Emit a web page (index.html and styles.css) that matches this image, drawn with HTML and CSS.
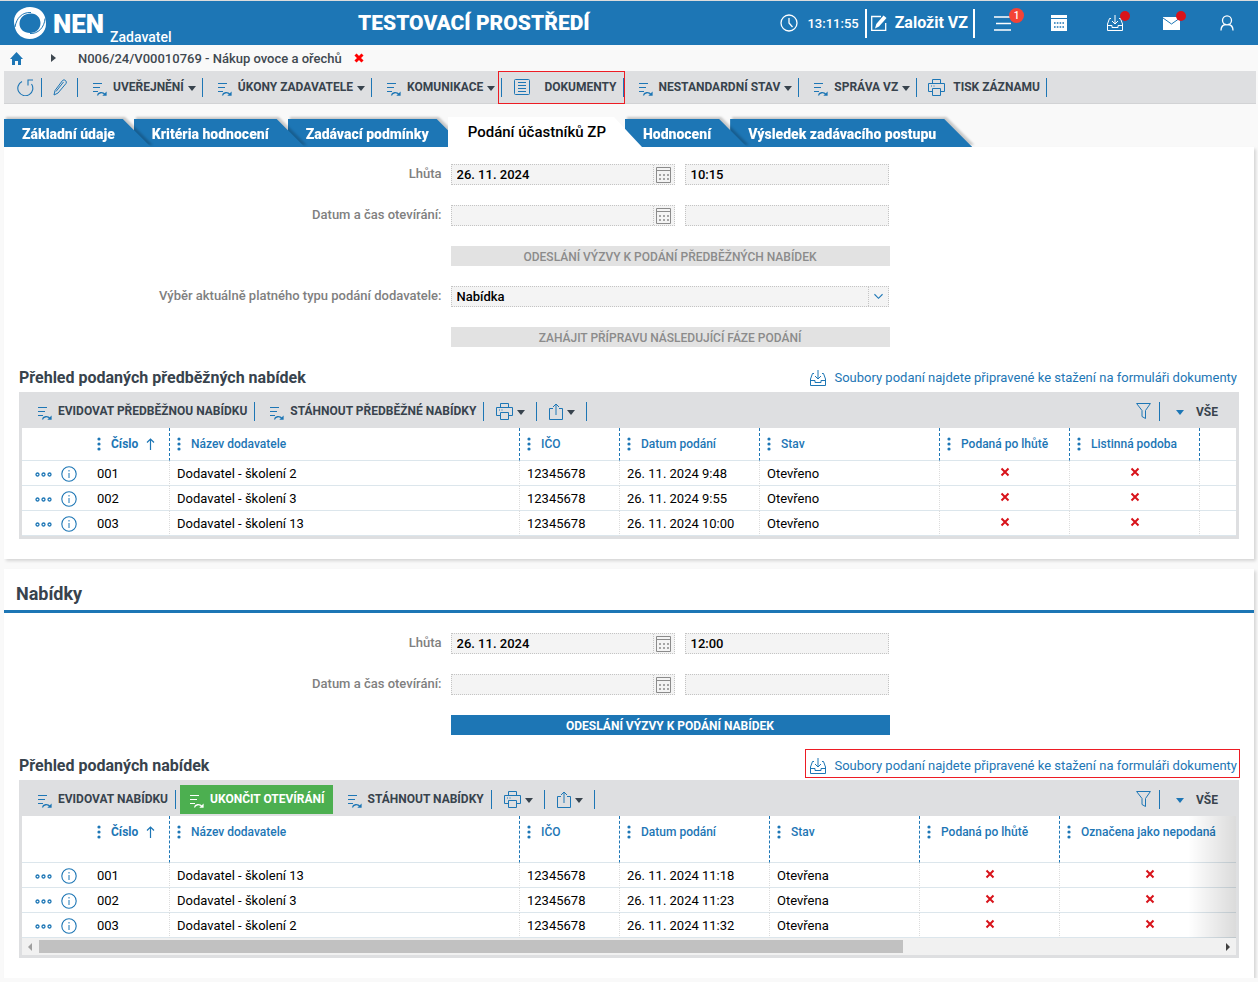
FILE: index.html
```html
<!DOCTYPE html>
<html lang="cs">
<head>
<meta charset="utf-8">
<title>NEN – Podání účastníků ZP</title>
<link rel="stylesheet" href="styles.css">
</head>
<body>
<svg class="sprite" aria-hidden="true">
  <symbol id="i-action" viewBox="0 0 14 14"><path d="M0 1.500h9M0 5.500h7M0 9.500h5" fill="none" stroke="currentColor"/><path d="M4.500 13.500c.5-3 5-4 7.500-1" fill="none" stroke="currentColor" stroke-width="1.300"/><path d="M13.600 9.500v4.200H9.300z" fill="currentColor"/></symbol>
  <symbol id="i-printer" viewBox="0 0 17 17"><path d="M4.500 4.500v-4h8v4M4.500 12.500h-4v-8h16v8h-4M4.500 9.500v7h8v-7zM3 7h1M5.500 7h1" fill="none" stroke="currentColor"/></symbol>
  <symbol id="i-share" viewBox="0 0 14 17"><path d="M4 5.500H.5v11h13v-11H10M7 12V1M4 4l3-3 3 3" fill="none" stroke="currentColor"/></symbol>
  <symbol id="i-filter" viewBox="0 0 15 16"><path d="M.6.500h13.800L9.500 7.500v8l-3.500-2v-6z" fill="none" stroke="currentColor"/></symbol>
  <symbol id="i-caret" viewBox="0 0 8 5"><path d="M0 0h8L4 5z" fill="currentColor"/></symbol>
  <symbol id="i-tray" viewBox="0 0 16 16"><path d="M4 3.500H2.500L.5 9v6.500h15V9l-2-5.500H12M.5 10.500h4.500v2h6v-2h4.500M8 0v9M5 6l3 3 3-3" fill="none" stroke="currentColor"/></symbol>
  <symbol id="i-cross" viewBox="0 0 10 10"><path d="M1.500 1.500l7 7M8.500 1.500l-7 7" fill="none" stroke="currentColor" stroke-width="2"/></symbol>
  <symbol id="i-dots" viewBox="0 0 4 14"><circle cx="2" cy="2" r="1.600" fill="currentColor"/><circle cx="2" cy="7" r="1.600" fill="currentColor"/><circle cx="2" cy="12" r="1.600" fill="currentColor"/></symbol>
  <symbol id="i-more" viewBox="0 0 17 5"><g fill="none" stroke="currentColor" stroke-width="1.300"><circle cx="2.500" cy="2.500" r="1.500"/><circle cx="8.500" cy="2.500" r="1.500"/><circle cx="14.500" cy="2.500" r="1.500"/></g></symbol>
  <symbol id="i-info" viewBox="0 0 16 16"><circle cx="8" cy="8" r="7.200" fill="none" stroke="currentColor" stroke-width="1.100"/><path d="M8 7v5M8 4v1.500" stroke="currentColor" fill="none"/></symbol>
  <symbol id="i-cal" viewBox="0 0 15 16"><path d="M.5.500h14v15H.5zM0 3.500h15" fill="none" stroke="currentColor"/><path d="M3 8h2M7 8h2M11 8h2M3 12h2M7 12h2M11 12h2" stroke="currentColor" stroke-width="1.500"/></symbol>
  <symbol id="i-up" viewBox="0 0 9 12"><path d="M4.500 12V1M1 4.500L4.500 1 8 4.500" fill="none" stroke="currentColor" stroke-width="1.200"/></symbol>
</svg>

<header class="top">
  <a class="brand" href="#">
    <svg class="logo" viewBox="0 0 32 32"><path fill-rule="evenodd" fill="#fff" d="M16 0C7 0 0 6.500 0 14c0 2 .3 3.500.6 4.500L1 21c2 7 8 11 14.500 11C25 32 32 25 32 17c0-2-.2-3.500-.6-5l-.4-2C29 3.500 23 0 16 0zM17 6.500c6 0 9.500 4.500 9.500 9.500 0 6-4.500 10-10.500 10S5.500 22 5.500 17C5.500 10.500 10.500 6.500 17 6.500z"/><path fill="none" stroke="#1d76b5" stroke-width="1" d="M1 20C2.500 11 8 5 17 5.500M31 11.500c-.5 9-7 15.500-15 15"/></svg>
    <span class="brand-name">NEN</span><span class="brand-role">Zadavatel</span>
  </a>
  <div class="env">TESTOVACÍ PROSTŘEDÍ</div>
  <div class="top-right">
    <svg class="clock" viewBox="0 0 18 18"><circle cx="9" cy="9" r="8" fill="none" stroke="#fff" stroke-width="1.300"/><path d="M9 4v5l3.500 4" fill="none" stroke="#fff" stroke-width="1.300"/></svg>
    <time class="time">13:11:55</time>
    <button class="create" type="button">
      <svg class="edit" viewBox="0 0 16 16"><path d="M10 1.500H.7v13.800h14V8" fill="none" stroke="#fff" stroke-width="1.300"/><path fill="#fff" d="M12.500.5l3 2.500-7.500 8.500-4 2 1.300-4.500z"/></svg>
      Založit VZ
    </button>
    <nav class="top-icons">
      <button class="ti" type="button" aria-label="Menu"><svg class="ico-menu" viewBox="0 0 18 15"><path d="M0 1h17M2 7.500h15M0 14h17" stroke="#fff" stroke-width="1.500"/></svg><span class="count">1</span></button>
      <button class="ti" type="button" aria-label="Kalendář"><svg class="ico16" viewBox="0 0 16 16"><path fill="#fff" d="M0 0h16v3H0zM0 4h16v12H0z"/><path d="M3 8h10M3 12h10" stroke="#1d76b5" stroke-width="1.600" stroke-dasharray="1.600 1.200"/></svg></button>
      <button class="ti" type="button" aria-label="Přijaté soubory"><svg class="ico16"><use href="#i-tray"/></svg><span class="dot"></span></button>
      <button class="ti" type="button" aria-label="Zprávy"><svg class="ico-mail" viewBox="0 0 17 13"><path fill="#fff" d="M0 0h17v13H0z"/><path d="M0 1l8.500 6L17 1" fill="none" stroke="#1d76b5"/></svg><span class="dot"></span></button>
      <button class="ti" type="button" aria-label="Uživatel"><svg class="ico16" viewBox="0 0 16 16"><circle cx="8" cy="5.300" r="4.500" fill="none" stroke="#fff" stroke-width="1.300"/><path d="M6.500 9.500C3.500 10 2 12.500 2 15.500M9.500 9.500c3 .5 4.500 3 4.500 6" fill="none" stroke="#fff" stroke-width="1.300"/></svg></button>
    </nav>
  </div>
</header>

<nav class="crumbs">
  <a class="home" href="#" aria-label="Domů"><svg class="ico-home" viewBox="0 0 13 13"><path fill="currentColor" d="M6.500 0L13 7h-2v6H8V9H5v4H2V7H0z"/></svg></a>
  <svg class="crumb-caret" viewBox="0 0 5 8"><path d="M0 0v8l5-4z" fill="currentColor"/></svg>
  <span class="crumb">N006/24/V00010769 - Nákup ovoce a ořechů</span>
  <button class="close" type="button" aria-label="Zavřít"><svg class="ico10" viewBox="0 0 10 10"><path d="M1.500 1.500l7 7M8.500 1.500l-7 7" stroke="currentColor" stroke-width="3"/></svg></button>
</nav>

<div class="toolbar main-bar">
  <button class="tool icon-only" type="button" aria-label="Obnovit"><svg class="ico17" viewBox="0 0 17 17"><path d="M5 2.500A7.500 7.500 0 1 0 14.500 5M11 6.500V1h5" fill="none" stroke="currentColor" stroke-width="1.100"/></svg></button>
  <button class="tool icon-only" type="button" aria-label="Upravit"><svg class="ico17" viewBox="0 0 17 17"><path d="M3 16l1-4.500L11.500 1.500q1.500-1.500 3 0t.5 3L7 14zM5 12.500L12.500 3" fill="none" stroke="currentColor"/></svg></button>
  <button class="tool" type="button"><svg class="act"><use href="#i-action"/></svg><span>UVEŘEJNĚNÍ</span><svg class="caret"><use href="#i-caret"/></svg></button>
  <button class="tool" type="button"><svg class="act"><use href="#i-action"/></svg><span>ÚKONY ZADAVATELE</span><svg class="caret"><use href="#i-caret"/></svg></button>
  <button class="tool" type="button"><svg class="act"><use href="#i-action"/></svg><span>KOMUNIKACE</span><svg class="caret"><use href="#i-caret"/></svg></button>
  <button class="tool docs" type="button"><svg class="ico16" viewBox="0 0 16 16"><rect x=".5" y=".5" width="15" height="15" rx="1" fill="none" stroke="currentColor"/><path d="M4 3.500h8M4 6.500h8M4 9.500h8M4 12.500h8" stroke="currentColor"/></svg><span>DOKUMENTY</span></button>
  <button class="tool" type="button"><svg class="act"><use href="#i-action"/></svg><span>NESTANDARDNÍ STAV</span><svg class="caret"><use href="#i-caret"/></svg></button>
  <button class="tool" type="button"><svg class="act"><use href="#i-action"/></svg><span>SPRÁVA VZ</span><svg class="caret"><use href="#i-caret"/></svg></button>
  <button class="tool print" type="button"><svg class="ico17"><use href="#i-printer"/></svg><span>TISK ZÁZNAMU</span></button>
</div>

<nav class="tabs">
  <a class="tab t1" href="#"><span class="tab-in">Základní údaje</span></a>
  <a class="tab t2" href="#"><span class="tab-in">Kritéria hodnocení</span></a>
  <a class="tab t3" href="#"><span class="tab-in">Zadávací podmínky</span></a>
  <a class="tab active" href="#" aria-current="page"><span class="tab-in">Podání účastníků ZP</span></a>
  <a class="tab t2" href="#"><span class="tab-in">Hodnocení</span></a>
  <a class="tab t3" href="#"><span class="tab-in">Výsledek zadávacího postupu</span></a>
</nav>

<main>
<section class="panel">
  <div class="form">
    <label for="d1">Lhůta</label>
    <div class="pair"><span class="date"><input id="d1" value="26. 11. 2024" readonly><button type="button" aria-label="Kalendář"><svg class="cal"><use href="#i-cal"/></svg></button></span><input class="field" aria-label="Lhůta – čas" value="10:15" readonly></div>
    <label for="d2">Datum a čas otevírání:</label>
    <div class="pair"><span class="date"><input id="d2" readonly><button type="button" aria-label="Kalendář"><svg class="cal"><use href="#i-cal"/></svg></button></span><input class="field" aria-label="Čas otevírání" readonly></div>
    <button class="wide" type="button" disabled>ODESLÁNÍ VÝZVY K PODÁNÍ PŘEDBĚŽNÝCH NABÍDEK</button>
    <label for="typ">Výběr aktuálně platného typu podání dodavatele:</label>
    <div class="select"><select id="typ"><option>Nabídka</option></select><svg class="chev" viewBox="0 0 10 6"><path d="M.5.500L5 5 9.500.500" fill="none" stroke="currentColor" stroke-width="1.200"/></svg></div>
    <button class="wide" type="button" disabled>ZAHÁJIT PŘÍPRAVU NÁSLEDUJÍCÍ FÁZE PODÁNÍ</button>
  </div>

  <div class="grid-head">
    <h3>Přehled podaných předběžných nabídek</h3>
    <a class="files" href="#"><svg class="ico16"><use href="#i-tray"/></svg>Soubory podaní najdete připravené ke stažení na formuláři dokumenty</a>
  </div>
  <div class="grid">
    <div class="toolbar">
      <button class="tool" type="button"><svg class="act"><use href="#i-action"/></svg><span>EVIDOVAT PŘEDBĚŽNOU NABÍDKU</span></button>
      <button class="tool" type="button"><svg class="act"><use href="#i-action"/></svg><span>STÁHNOUT PŘEDBĚŽNÉ NABÍDKY</span></button>
      <button class="tool mini" type="button" aria-label="Tisk"><svg class="ico17"><use href="#i-printer"/></svg><svg class="caret"><use href="#i-caret"/></svg></button>
      <button class="tool mini" type="button" aria-label="Export"><svg class="share"><use href="#i-share"/></svg><svg class="caret"><use href="#i-caret"/></svg></button>
      <div class="bar-right">
        <button class="tool filter" type="button" aria-label="Filtr"><svg class="ico-filter"><use href="#i-filter"/></svg></button>
        <button class="all" type="button"><svg class="caret blue"><use href="#i-caret"/></svg>VŠE</button>
      </div>
    </div>
    <table>
      <colgroup><col class="w68"><col class="w80"><col class="w350"><col class="w100"><col class="w140"><col class="w180"><col class="w130"><col class="w130"><col></colgroup>
      <thead><tr><th></th>
        <th><span class="th"><svg class="dots"><use href="#i-dots"/></svg><b>Číslo</b><svg class="up"><use href="#i-up"/></svg></span></th>
        <th><span class="th"><svg class="dots"><use href="#i-dots"/></svg>Název dodavatele</span></th>
        <th><span class="th"><svg class="dots"><use href="#i-dots"/></svg>IČO</span></th>
        <th><span class="th"><svg class="dots"><use href="#i-dots"/></svg>Datum podání</span></th>
        <th><span class="th"><svg class="dots"><use href="#i-dots"/></svg>Stav</span></th>
        <th><span class="th"><svg class="dots"><use href="#i-dots"/></svg>Podaná po lhůtě</span></th>
        <th><span class="th"><svg class="dots"><use href="#i-dots"/></svg>Listinná podoba</span></th>
        <th></th></tr></thead>
      <tbody>
        <tr><td class="acts"><svg class="more"><use href="#i-more"/></svg><svg class="ico16"><use href="#i-info"/></svg></td><td>001</td><td>Dodavatel - školení 2</td><td>12345678</td><td>26. 11. 2024 9:48</td><td>Otevřeno</td><td class="no"><svg class="ico10"><use href="#i-cross"/></svg></td><td class="no"><svg class="ico10"><use href="#i-cross"/></svg></td><td></td></tr>
        <tr><td class="acts"><svg class="more"><use href="#i-more"/></svg><svg class="ico16"><use href="#i-info"/></svg></td><td>002</td><td>Dodavatel - školení 3</td><td>12345678</td><td>26. 11. 2024 9:55</td><td>Otevřeno</td><td class="no"><svg class="ico10"><use href="#i-cross"/></svg></td><td class="no"><svg class="ico10"><use href="#i-cross"/></svg></td><td></td></tr>
        <tr><td class="acts"><svg class="more"><use href="#i-more"/></svg><svg class="ico16"><use href="#i-info"/></svg></td><td>003</td><td>Dodavatel - školení 13</td><td>12345678</td><td>26. 11. 2024 10:00</td><td>Otevřeno</td><td class="no"><svg class="ico10"><use href="#i-cross"/></svg></td><td class="no"><svg class="ico10"><use href="#i-cross"/></svg></td><td></td></tr>
      </tbody>
    </table>
  </div>
</section>

<section class="panel second">
  <h2>Nabídky</h2>
  <div class="form">
    <label for="d3">Lhůta</label>
    <div class="pair"><span class="date"><input id="d3" value="26. 11. 2024" readonly><button type="button" aria-label="Kalendář"><svg class="cal"><use href="#i-cal"/></svg></button></span><input class="field" aria-label="Lhůta – čas" value="12:00" readonly></div>
    <label for="d4">Datum a čas otevírání:</label>
    <div class="pair"><span class="date"><input id="d4" readonly><button type="button" aria-label="Kalendář"><svg class="cal"><use href="#i-cal"/></svg></button></span><input class="field" aria-label="Čas otevírání" readonly></div>
    <button class="wide primary" type="button">ODESLÁNÍ VÝZVY K PODÁNÍ NABÍDEK</button>
  </div>

  <div class="grid-head">
    <h3>Přehled podaných nabídek</h3>
    <a class="files marked" href="#"><svg class="ico16"><use href="#i-tray"/></svg>Soubory podaní najdete připravené ke stažení na formuláři dokumenty</a>
  </div>
  <div class="grid">
    <div class="toolbar">
      <button class="tool" type="button"><svg class="act"><use href="#i-action"/></svg><span>EVIDOVAT NABÍDKU</span></button>
      <button class="finish" type="button"><svg class="act"><use href="#i-action"/></svg><span>UKONČIT OTEVÍRÁNÍ</span></button>
      <button class="tool" type="button"><svg class="act"><use href="#i-action"/></svg><span>STÁHNOUT NABÍDKY</span></button>
      <button class="tool mini" type="button" aria-label="Tisk"><svg class="ico17"><use href="#i-printer"/></svg><svg class="caret"><use href="#i-caret"/></svg></button>
      <button class="tool mini" type="button" aria-label="Export"><svg class="share"><use href="#i-share"/></svg><svg class="caret"><use href="#i-caret"/></svg></button>
      <div class="bar-right">
        <button class="tool filter" type="button" aria-label="Filtr"><svg class="ico-filter"><use href="#i-filter"/></svg></button>
        <button class="all" type="button"><svg class="caret blue"><use href="#i-caret"/></svg>VŠE</button>
      </div>
    </div>
    <div class="clip">
    <table class="tall">
      <colgroup><col class="w68"><col class="w80"><col class="w350"><col class="w100"><col class="w150"><col class="w150"><col class="w140"><col></colgroup>
      <thead><tr><th></th>
        <th><span class="th"><svg class="dots"><use href="#i-dots"/></svg><b>Číslo</b><svg class="up"><use href="#i-up"/></svg></span></th>
        <th><span class="th"><svg class="dots"><use href="#i-dots"/></svg>Název dodavatele</span></th>
        <th><span class="th"><svg class="dots"><use href="#i-dots"/></svg>IČO</span></th>
        <th><span class="th"><svg class="dots"><use href="#i-dots"/></svg>Datum podání</span></th>
        <th><span class="th"><svg class="dots"><use href="#i-dots"/></svg>Stav</span></th>
        <th><span class="th"><svg class="dots"><use href="#i-dots"/></svg>Podaná po lhůtě</span></th>
        <th><span class="th"><svg class="dots"><use href="#i-dots"/></svg>Označena jako nepodaná</span></th></tr></thead>
      <tbody>
        <tr><td class="acts"><svg class="more"><use href="#i-more"/></svg><svg class="ico16"><use href="#i-info"/></svg></td><td>001</td><td>Dodavatel - školení 13</td><td>12345678</td><td>26. 11. 2024 11:18</td><td>Otevřena</td><td class="no"><svg class="ico10"><use href="#i-cross"/></svg></td><td class="no"><svg class="ico10"><use href="#i-cross"/></svg></td></tr>
        <tr><td class="acts"><svg class="more"><use href="#i-more"/></svg><svg class="ico16"><use href="#i-info"/></svg></td><td>002</td><td>Dodavatel - školení 3</td><td>12345678</td><td>26. 11. 2024 11:23</td><td>Otevřena</td><td class="no"><svg class="ico10"><use href="#i-cross"/></svg></td><td class="no"><svg class="ico10"><use href="#i-cross"/></svg></td></tr>
        <tr><td class="acts"><svg class="more"><use href="#i-more"/></svg><svg class="ico16"><use href="#i-info"/></svg></td><td>003</td><td>Dodavatel - školení 2</td><td>12345678</td><td>26. 11. 2024 11:32</td><td>Otevřena</td><td class="no"><svg class="ico10"><use href="#i-cross"/></svg></td><td class="no"><svg class="ico10"><use href="#i-cross"/></svg></td></tr>
      </tbody>
    </table>
    </div>
    <div class="scroll">
      <svg class="arrow off" viewBox="0 0 4 8"><path d="M4 0v8L0 4z" fill="currentColor"/></svg>
      <div class="track"><div class="thumb"></div></div>
      <svg class="arrow" viewBox="0 0 4 8"><path d="M0 0v8l4-4z" fill="currentColor"/></svg>
    </div>
  </div>
</section>
</main>
</body>
</html>
```
FILE: styles.css
```css
* { box-sizing: border-box; }
body {
  margin: 0;
  background: #f9f9f9;
  color: #000;
  font-family: Roboto, "Liberation Sans", sans-serif;
  font-size: 13px;
  line-height: 16px;
}
button, input, select { font: inherit; color: inherit; margin: 0; padding: 0; border: 0; background: none; border-radius: 0; }
svg { display: block; flex: none; }
a { text-decoration: none; color: inherit; }
.sprite { position: absolute; width: 0; height: 0; }

.ico10 { width: 10px; height: 10px; }
.ico16 { width: 16px; height: 16px; }
.ico17 { width: 17px; height: 17px; }

/* header */
.top {
  display: grid;
  grid-template-columns: 358px auto 1fr;
  height: 45px;
  background: #1d76b5;
  border-top: 1px solid #dcdcdc;
  color: #fff;
}
.brand { display: flex; align-items: center; padding-left: 14px; }
.logo { width: 32px; height: 32px; margin-right: 7px; }
.brand-name { font-size: 26px; font-weight: 900; margin-right: 6px; padding-top: 2px; }
.brand-role { align-self: flex-end; font-size: 14px; font-weight: 500; }
.env { font-size: 21px; font-weight: 900; line-height: 44px; }
.top-right { display: flex; align-items: center; justify-content: flex-end; padding-right: 3px; }
.clock { width: 18px; height: 18px; margin-right: 9px; }
.time { font-weight: 500; padding-top: 2px; }
.create {
  display: flex; align-items: center; gap: 8px;
  height: 29px; margin-left: 6px; padding: 0 5px 0 4px;
  border-left: 2px solid #fff; border-right: 2px solid #fff;
  font-size: 16px; font-weight: 700;
}
.edit { width: 16px; height: 16px; }
.top-icons { display: flex; }
.ti { position: relative; width: 56px; height: 44px; display: flex; align-items: center; justify-content: center; }
.ico-menu { width: 18px; height: 15px; }
.ico-mail { width: 17px; height: 13px; }
.count, .dot { position: absolute; border-radius: 50%; }
.count { top: 7px; left: 34px; width: 15px; height: 15px; line-height: 15px; font-size: 10px; font-weight: 500; background: #f44336; }
.dot { top: 10px; left: 33px; width: 10px; height: 10px; background: #d8131a; }

/* breadcrumb */
.crumbs { display: flex; align-items: center; height: 26px; padding-left: 10px; font-weight: 500; color: #3f4850; }
.crumb { padding-top: 2px; }
.home { color: #1d76b5; }
.ico-home { width: 13px; height: 13px; }
.crumb-caret { width: 5px; height: 8px; margin: 0 22px 0 28px; }
.close { color: #f00; margin-left: 12px; }

/* toolbars */
.toolbar { display: flex; align-items: center; background: #dedfe1; color: #38434d; font-size: 12px; font-weight: 700; }
.main-bar { height: 33px; margin: 0 2px 0 4px; border-bottom: 1px solid #d2d3d5; }
.tool { position: relative; display: flex; align-items: center; height: 19px; padding: 0 7px 0 15px; border-right: 1px solid #1d76b5; white-space: nowrap; }
.main-bar .tool { padding-right: 6px; }
.tool svg, .all .blue { color: #1d76b5; }
.act { width: 14px; height: 14px; margin: 4px 6px 0 0; }
.caret { width: 8px; height: 5px; margin-left: 4px; }
.tool .caret { color: #38434d; margin-top: 2px; }
.main-bar .icon-only { width: 36px; padding: 0; justify-content: center; }
.main-bar .icon-only:first-child { width: 38px; padding-left: 5px; }
.main-bar .docs { padding-left: 12px; }
.docs span { margin-left: 14px; }
.docs::after { content: ""; position: absolute; inset: -7px -2px -7px -4px; border: 1px solid #ed1c24; }
.main-bar .print { padding-left: 11px; }
.print span { margin-left: 8px; }
.tool.mini { padding: 0 11px 0 12px; }
.share { width: 14px; height: 17px; }
.bar-right { display: flex; align-items: center; margin-left: auto; }
.tool.filter { padding-right: 8px; }
.ico-filter { width: 15px; height: 16px; }
.all { display: flex; align-items: center; gap: 12px; padding: 2px 18px 0 12px; }
.finish { display: flex; align-items: center; height: 29px; margin-left: 4px; padding: 0 8px 0 10px; background: #4caf50; color: #fff; }

/* tabs */
.tabs { display: flex; align-items: flex-end; padding: 13px 4px 0; color: #fff; }
.tab { position: relative; margin-right: -17px; filter: drop-shadow(2px -2px 1px rgba(0, 0, 0, .2)); }
.tab-in {
  display: block; height: 28px; padding: 0 36px 0 18px; line-height: 30px;
  font-size: 14px; font-weight: 900; white-space: nowrap; background: #1d76b5;
  clip-path: polygon(0 0, calc(100% - 28px) 0, 100% 100%, 0 100%);
}
.t1 { z-index: 3; }
.t2 { z-index: 2; }
.t3 { z-index: 1; }
.active { z-index: 4; color: #000; filter: none; }
.active .tab-in { height: 30px; padding-left: 20px; font-size: 15px; font-weight: 500; background: #fff; }

/* panels */
.panel { margin: 0 4px 10px; padding: 17px 15px 20px 15px; background: #fff; box-shadow: 2px 2px 3px rgba(0, 0, 0, .14); }
.panel.second { padding-top: 0; margin-bottom: 0; }
h2 { margin: 0 -15px 20px; padding: 13px 12px 4px; font-size: 18px; line-height: 24px; font-weight: 700; color: #38434d; border-bottom: 3px solid #1d76b5; }

.form { display: grid; grid-template-columns: 35% 36%; gap: 20px 9px; margin: 0 -15px; }
.form label { padding-top: 2px; text-align: right; font-weight: 500; color: #808080; }
.pair { display: grid; grid-template-columns: 224fr 204fr; gap: 10px; padding-right: 12px; }
.date, .field, .select { height: 21px; background: #f4f4f4; border: 1px dotted #c4c4c4; font-weight: 500; }
.date { display: flex; }
.date input { flex: 1; min-width: 0; padding-left: 5px; }
.date button { width: 21px; display: flex; align-items: center; justify-content: center; border-left: 1px dotted #c4c4c4; color: #8b8b8b; }
.cal { width: 15px; height: 16px; }
.field { width: 100%; padding-left: 5px; }
.select { position: relative; margin-right: 12px; }
.select select { width: 100%; height: 100%; padding-left: 5px; appearance: none; }
.chev { position: absolute; top: 0; right: 0; width: 20px; height: 19px; padding: 6px 5px; border-left: 1px dotted #c4c4c4; color: #1d76b5; pointer-events: none; }
.wide { grid-column: 2; height: 20px; margin-right: 11px; padding-top: 2px; background: #e2e2e2; color: #8b8b8b; font-size: 12px; font-weight: 500; }
.wide.primary { background: #1d76b5; color: #fff; font-weight: 700; }

/* grids */
.grid-head { display: flex; justify-content: space-between; align-items: center; height: 30px; margin-top: 15px; padding-top: 2px; }
h3 { margin: 0; font-size: 16px; font-weight: 700; color: #38434d; }
.files { position: relative; display: flex; align-items: center; gap: 8px; padding-right: 2px; color: #1d76b5; }
.marked::after { content: ""; position: absolute; inset: -9px -1px -4px -5px; border: 1px solid #ed1c24; }
.grid { border: solid #dedfe1; border-width: 0 3px 3px; }
.grid .toolbar { height: 36px; padding: 2px 0 0 1px; }
table { width: 100%; table-layout: fixed; border-collapse: separate; border-spacing: 0; background: #fff; }
.clip { position: relative; overflow: hidden; }
.clip table { min-width: 1218px; }
.clip::after { content: ""; position: absolute; inset: 0 0 0 auto; width: 48px; background: linear-gradient(to right, transparent, rgba(0, 0, 0, .14)); pointer-events: none; }
.w68 { width: 68px; } .w80 { width: 80px; } .w100 { width: 100px; } .w130 { width: 130px; }
.w140 { width: 140px; } .w150 { width: 150px; } .w180 { width: 180px; } .w350 { width: 350px; }
th { height: 33px; padding: 8px 0 0 7px; vertical-align: top; text-align: left; font-size: 12px; font-weight: 500; color: #1d76b5; border-bottom: 1px solid #dce6ec; border-right: 1px dashed #1d76b5; }
.tall th { height: 47px; }
.th { display: flex; align-items: center; white-space: nowrap; }
.dots { width: 4px; height: 14px; margin-right: 10px; }
.up { width: 9px; height: 12px; margin-left: 8px; }
td { height: 25px; padding: 2px 0 0 7px; border-bottom: 1px solid #dce6ec; border-right: 1px dotted #dcdcdc; white-space: nowrap; }
th:first-child, th:last-child, td:first-child, td:last-child { border-right: 0; }
.acts { color: #1d76b5; padding-left: 13px; }
.acts svg { display: inline-block; vertical-align: middle; }
.more { width: 17px; height: 5px; margin-right: 9px; }
.no { padding: 0 0 2px; color: #d8131a; }
.no svg { margin: 0 auto; }

.scroll { display: flex; align-items: center; height: 17px; padding: 0 6px; background: #f1f1f1; }
.arrow { width: 4px; height: 8px; color: #404040; }
.arrow.off { color: #a0a0a0; }
.track { flex: 1; margin: 0 19px 0 7px; }
.thumb { width: 74%; height: 13px; background: #c1c1c1; }
```
